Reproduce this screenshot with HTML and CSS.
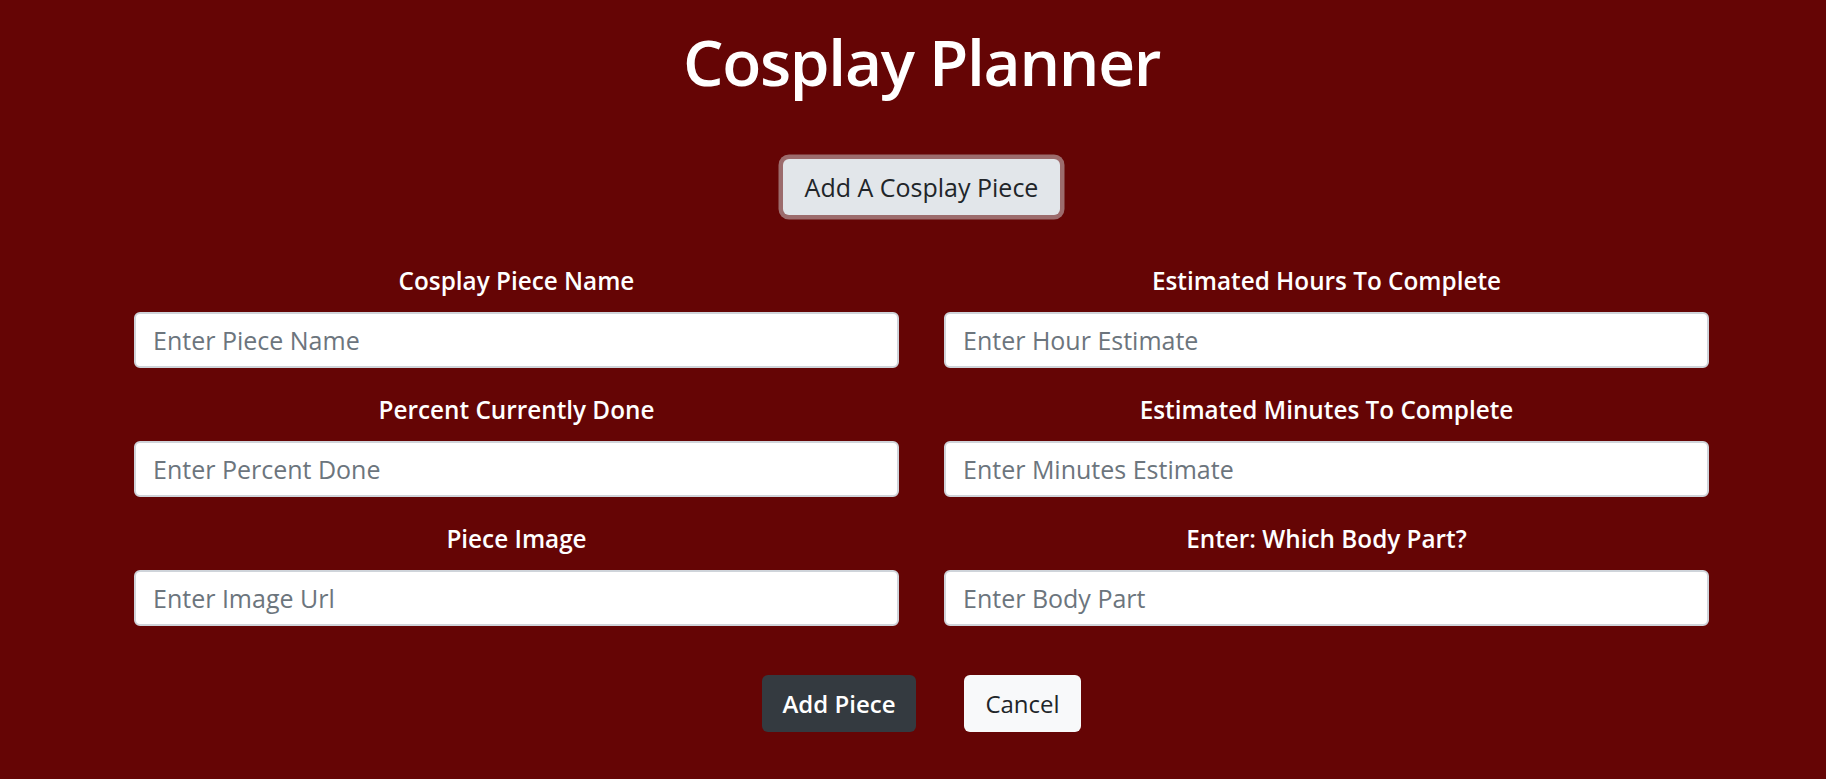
FILE: index.html
```html
<!DOCTYPE html>
<html lang="en">
<head>
<meta charset="utf-8">
<title>Cosplay Planner</title>
<link rel="stylesheet" href="styles.css">
</head>
<body>
<main class="page">
  <h1 class="title">Cosplay Planner</h1>
  <div class="toggle-row">
    <button class="btn btn-toggle" type="button">Add A Cosplay Piece</button>
  </div>
  <form class="piece-form">
    <div class="fields">
      <div class="field">
        <label class="field-label" for="name">Cosplay Piece Name</label>
        <input class="field-input" id="name" type="text" placeholder="Enter Piece Name">
      </div>
      <div class="field">
        <label class="field-label" for="hours">Estimated Hours To Complete</label>
        <input class="field-input" id="hours" type="text" placeholder="Enter Hour Estimate">
      </div>
      <div class="field">
        <label class="field-label" for="percent">Percent Currently Done</label>
        <input class="field-input" id="percent" type="text" placeholder="Enter Percent Done">
      </div>
      <div class="field">
        <label class="field-label" for="minutes">Estimated Minutes To Complete</label>
        <input class="field-input" id="minutes" type="text" placeholder="Enter Minutes Estimate">
      </div>
      <div class="field">
        <label class="field-label" for="image">Piece Image</label>
        <input class="field-input" id="image" type="text" placeholder="Enter Image Url">
      </div>
      <div class="field">
        <label class="field-label" for="part">Enter: Which Body Part?</label>
        <input class="field-input" id="part" type="text" placeholder="Enter Body Part">
      </div>
    </div>
    <div class="actions">
      <button class="btn btn-dark" type="button">Add Piece</button>
      <button class="btn btn-light" type="button">Cancel</button>
    </div>
  </form>
</main>
</body>
</html>
```

FILE: styles.css
```css
html, body {
  margin: 0;
  padding: 0;
}

body {
  background: #650505;
  font-family: "Open Sans", "Noto Sans", sans-serif;
  color: #ffffff;
  height: 779px;
  overflow: hidden;
}

.page {
  display: flex;
  flex-direction: column;
  padding: 0 117px 0 134px;
}

.title {
  margin: 25px 0 0;
  text-align: center;
  font-size: 64px;
  line-height: 74px;
  font-weight: 600;
  letter-spacing: -1.3px;
  color: #ffffff;
}

.toggle-row {
  display: flex;
  justify-content: center;
  margin-top: 60px;
}

.btn {
  display: inline-flex;
  align-items: center;
  justify-content: center;
  height: 56px;
  padding: 0 20px;
  border: 0;
  border-radius: 6px;
  font-family: inherit;
  font-size: 24px;
  cursor: pointer;
}

.btn-toggle {
  width: 277px;
  padding: 0;
  background: #e2e6ea;
  color: #212529;
  font-size: 25px;
  font-weight: 500;
  box-shadow: 0 0 0 4.5px rgba(211, 212, 213, 0.5);
}

.piece-form {
  display: flex;
  flex-direction: column;
  padding-top: 48px;
}

.fields {
  display: grid;
  grid-template-columns: 1fr 1fr;
  column-gap: 45px;
  row-gap: 24px;
}

.field {
  display: flex;
  flex-direction: column;
}

.field-label {
  text-align: center;
  font-size: 24.3px;
  line-height: 36px;
  font-weight: 600;
  margin-bottom: 13px;
}

.field-input {
  box-sizing: border-box;
  height: 56px;
  width: 100%;
  padding: 0 17px;
  border: 2px solid #cfd4da;
  border-radius: 6px;
  background: #ffffff;
  font-family: inherit;
  font-size: 25px;
  color: #495057;
}

.field-input::placeholder {
  color: #6c757d;
}

.actions {
  display: flex;
  justify-content: center;
  gap: 48px;
  margin-top: 49px;
}

.btn-dark {
  height: 57px;
  width: 154px;
  padding: 0;
  background: #343a40;
  color: #ffffff;
  font-weight: 600;
}

.btn-light {
  height: 57px;
  width: 117px;
  padding: 0;
  background: #f8f9fa;
  color: #212529;
  font-weight: 400;
}
```
